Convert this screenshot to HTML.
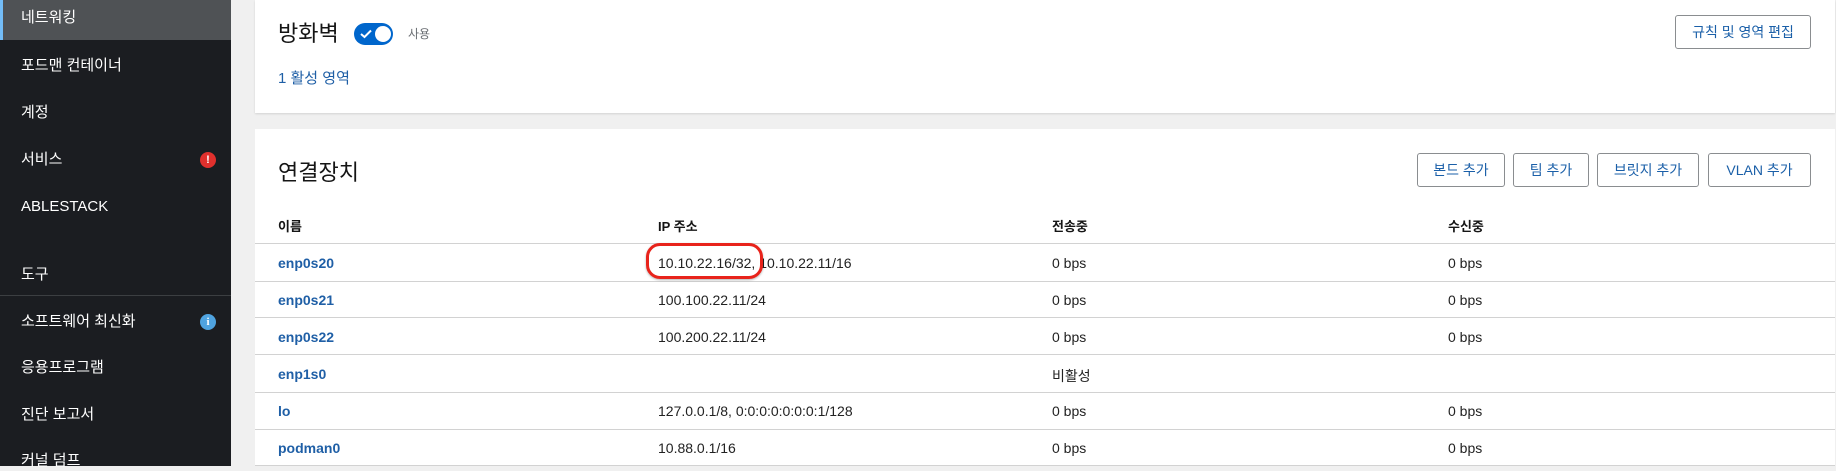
<!DOCTYPE html>
<html><head><meta charset="utf-8"><style>
*{margin:0;padding:0;box-sizing:border-box}
body{width:1836px;height:466px;overflow:hidden;background:#f0f0f0;font-family:"Liberation Sans","Noto Sans CJK KR",sans-serif;position:relative}
.side{position:absolute;left:0;top:0;width:231px;height:466px;background:#1b1d21}
.si{position:absolute;left:21px;color:#fff;font-size:15px;line-height:20px}
.act{position:absolute;left:0;top:0;width:231px;height:40px;background:#4f5255;border-left:3px solid #73bcf7}
.sep{position:absolute;left:0;top:295px;width:231px;height:1px;background:#3c3f42}
.badge{position:absolute;left:200px;width:16px;height:16px;border-radius:50%;color:#fff;font-size:11px;font-weight:bold;text-align:center;line-height:16px}
.card{position:absolute;left:255px;width:1580px;background:#fff}
.abs{position:absolute}
.btn{position:absolute;height:34px;border:1px solid #8a8d90;border-radius:3px;color:#1a5fa8;font-size:14px;line-height:32px;text-align:center;background:#fff}
.th{position:absolute;font-size:13px;font-weight:bold;color:#151515}
.row{position:absolute;left:0;width:1580px;height:1px;background:#d2d2d2}
.td{position:absolute;font-size:14px;color:#222}
.nm{position:absolute;left:23px;font-size:14px;font-weight:bold;color:#1f5fa6}
</style></head><body>
<div class="side">
<div class="act"></div>
<div class="si" style="top:8px">네트워킹</div>
<div class="si" style="top:56px">포드맨 컨테이너</div>
<div class="si" style="top:103px">계정</div>
<div class="si" style="top:150px">서비스</div>
<div class="badge" style="top:152px;background:#e0302d">!</div>
<div class="si" style="top:197px">ABLESTACK</div>
<div class="si" style="top:265px">도구</div>
<div class="sep"></div>
<div class="si" style="top:312px">소프트웨어 최신화</div>
<div class="badge" style="top:314px;background:#4fa3e0;font-family:'Liberation Serif',serif">i</div>
<div class="si" style="top:358px">응용프로그램</div>
<div class="si" style="top:405px">진단 보고서</div>
<div class="si" style="top:451px">커널 덤프</div>
</div>

<div class="card" style="top:0;height:113px;box-shadow:0 1px 2px rgba(0,0,0,.12)">
<div class="abs" style="left:23px;top:16px;font-size:22px;color:#151515">방화벽</div>
<div class="abs" style="left:99px;top:23px;width:39px;height:22px;border-radius:11px;background:#06c"></div>
<div class="abs" style="left:120px;top:26px;width:16px;height:16px;border-radius:50%;background:#fff"></div>
<svg class="abs" style="left:105px;top:29px" width="12" height="10"><path d="M1 5 L4.5 8 L11 1.5" stroke="#fff" stroke-width="2" fill="none"/></svg>
<div class="abs" style="left:153px;top:25px;font-size:12px;color:#6a6e73">사용</div>
<div class="abs" style="left:23px;top:67px;font-size:15px;color:#1f5fa6">1 활성 영역</div>
<div class="btn" style="left:1420px;top:15px;width:136px">규칙 및 영역 편집</div>
</div>

<div class="card" style="top:129px;height:337px">
<div class="abs" style="left:23px;top:26px;font-size:22px;color:#151515">연결장치</div>
<div class="btn" style="left:1162px;top:24px;width:88px">본드 추가</div>
<div class="btn" style="left:1258px;top:24px;width:76px">팀 추가</div>
<div class="btn" style="left:1342px;top:24px;width:102px">브릿지 추가</div>
<div class="btn" style="left:1453px;top:24px;width:103px">VLAN 추가</div>
<div class="th" style="left:23px;top:87px">이름</div>
<div class="th" style="left:403px;top:87px">IP 주소</div>
<div class="th" style="left:797px;top:87px">전송중</div>
<div class="th" style="left:1193px;top:87px">수신중</div>
<div class="row" style="top:114px"></div>
<div class="nm" style="top:126px">enp0s20</div><div class="td" style="left:403px;top:126px">10.10.22.16/32, 10.10.22.11/16</div><div class="td" style="left:797px;top:126px">0 bps</div><div class="td" style="left:1193px;top:126px">0 bps</div>
<div class="row" style="top:152px"></div>
<div class="nm" style="top:163px">enp0s21</div><div class="td" style="left:403px;top:163px">100.100.22.11/24</div><div class="td" style="left:797px;top:163px">0 bps</div><div class="td" style="left:1193px;top:163px">0 bps</div>
<div class="row" style="top:188px"></div>
<div class="nm" style="top:200px">enp0s22</div><div class="td" style="left:403px;top:200px">100.200.22.11/24</div><div class="td" style="left:797px;top:200px">0 bps</div><div class="td" style="left:1193px;top:200px">0 bps</div>
<div class="row" style="top:225px"></div>
<div class="nm" style="top:237px">enp1s0</div><div class="td" style="left:797px;top:237px">비활성</div>
<div class="row" style="top:263px"></div>
<div class="nm" style="top:274px">lo</div><div class="td" style="left:403px;top:274px">127.0.0.1/8, 0:0:0:0:0:0:0:1/128</div><div class="td" style="left:797px;top:274px">0 bps</div><div class="td" style="left:1193px;top:274px">0 bps</div>
<div class="row" style="top:300px"></div>
<div class="nm" style="top:311px">podman0</div><div class="td" style="left:403px;top:311px">10.88.0.1/16</div><div class="td" style="left:797px;top:311px">0 bps</div><div class="td" style="left:1193px;top:311px">0 bps</div>
<div class="row" style="top:336px"></div>
<div class="abs" style="left:391px;top:114px;width:117px;height:36px;border:3px solid #e8231b;border-radius:14px;box-shadow:0 1px 2px rgba(0,0,0,.3)"></div>
</div>
</body></html>
